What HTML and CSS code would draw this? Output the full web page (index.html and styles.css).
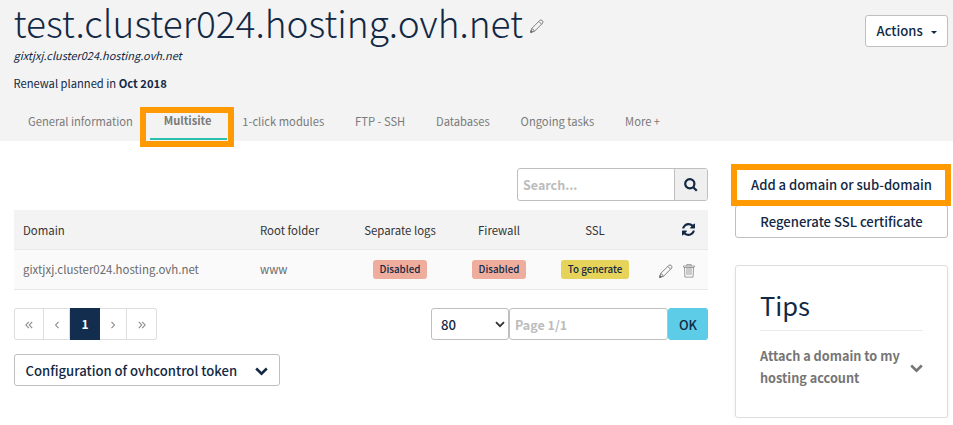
FILE: index.html
```
<!DOCTYPE html>
<html lang="en">
<head>
<meta charset="utf-8">
<title>test.cluster024.hosting.ovh.net</title>
<link rel="stylesheet" href="styles.css">
</head>
<body>
<svg class="defs" width="0" height="0" aria-hidden="true">
  <symbol id="pencil" viewBox="0 0 14 14">
    <path d="M.8 13.2 1.6 9.6 9.8 1.4Q11 .3 12.3 1.6T12.6 4.2L4.4 12.4Z M1.6 9.6Q3.8 9.9 4.4 12.4 M8.8 2.4l2.8 2.8"/>
    <path class="solid" d="M.5 13.5l.5-2 1.5 1.5z"/>
  </symbol>
</svg>
<header class="header">
  <div class="header-top">
    <div>
      <h1 class="title">test.cluster024.hosting.ovh.net<svg class="pencil pencil-title" width="14" height="14"><use href="#pencil"/></svg></h1>
      <p class="subtitle">gixtjxj.cluster024.hosting.ovh.net</p>
      <p class="renewal">Renewal planned in <b>Oct 2018</b></p>
    </div>
    <button class="btn actions">Actions <span class="caret"></span></button>
  </div>
  <nav class="tabs">
    <a class="tab">General information</a>
    <a class="tab active">Multisite</a>
    <a class="tab">1-click modules</a>
    <a class="tab">FTP - SSH</a>
    <a class="tab">Databases</a>
    <a class="tab">Ongoing tasks</a>
    <a class="tab">More +</a>
  </nav>
</header>
<main class="content">
  <section class="main-col">
    <div class="search">
      <div class="search-field">Search...</div>
      <button class="search-btn"><svg width="14" height="14" viewBox="0 0 14 14"><circle cx="5.8" cy="5.8" r="4.6"/><path d="M9.2 9.2l3.6 3.6"/></svg></button>
    </div>
    <div class="row head">
      <span>Domain</span><span>Root folder</span><span class="mid">Separate logs</span><span class="mid">Firewall</span><span class="mid">SSL</span>
      <span class="tools"><svg class="refresh" width="13" height="13" viewBox="0 0 1536 1536"><path d="M1511 928q0 5-1 7-64 268-268 434.500T764 1536q-146 0-282.500-55T238 1324l-129 129q-19 19-45 19t-45-19-19-45V960q0-26 19-45t45-19h448q26 0 45 19t19 45-19 45l-137 137q71 66 161 102t187 36q134 0 250-65t186-179q11-17 53-117 8-23 30-23h192q13 0 22.500 9.500t9.500 22.500zm25-800v448q0 26-19 45t-45 19h-448q-26 0-45-19t-19-45 19-45l138-138Q969 256 768 256q-134 0-250 65T332 500q-11 17-53 117-8 23-30 23H50q-13 0-22.500-9.500T18 608v-7q65-268 270-434.500T768 0q146 0 284 55.500T1297 212l130-129q19-19 45-19t45 19 19 45z"/></svg></span>
    </div>
    <div class="row item">
      <span>gixtjxj.cluster024.hosting.ovh.net</span><span>www</span>
      <span class="mid"><span class="badge red">Disabled</span></span>
      <span class="mid"><span class="badge red">Disabled</span></span>
      <span class="mid"><span class="badge yellow">To generate</span></span>
      <span class="tools">
        <svg class="pencil" width="14" height="14"><use href="#pencil"/></svg>
        <svg class="trash" width="12" height="14" viewBox="0 0 12 14"><path d="M.5 3V2h11v1M3.800 2V.6h4.400V2M1.500 3.500l.4 9.600h8.200l.4-9.600M4 4v7M6 4v7M8 4v7M.8 3.500h10.400"/></svg>
      </span>
    </div>
    <div class="pager-row">
      <div class="pager">
        <span><svg width="8" height="8" viewBox="0 0 8 8"><path d="M3.800.8.9 4l2.900 3.200M7.200.8 4.300 4l2.900 3.200"/></svg></span>
        <span><svg width="8" height="8" viewBox="0 0 8 8"><path d="M5.500.8 2.600 4l2.900 3.200"/></svg></span>
        <span class="current">1</span>
        <span><svg width="8" height="8" viewBox="0 0 8 8"><path d="M2.500.8 5.400 4 2.500 7.200"/></svg></span>
        <span><svg width="8" height="8" viewBox="0 0 8 8"><path d="M.8.8 3.700 4 .8 7.200M4.200.8 7.100 4 4.200 7.200"/></svg></span>
      </div>
      <div class="goto">
        <div class="select">80<svg width="10" height="7" viewBox="0 0 10 7"><path d="M1 1.200l4 4 4-4"/></svg></div>
        <div class="page-field">Page 1/1</div>
        <button class="ok">OK</button>
      </div>
    </div>
    <button class="btn token">Configuration of ovhcontrol token<svg class="chevron" width="13" height="9" viewBox="0 0 13 9"><path d="M1.200 1.500 6.500 6.600l5.300-5.100"/></svg></button>
  </section>
  <aside class="side">
    <button class="btn wide marked">Add a domain or sub-domain</button>
    <button class="btn wide">Regenerate SSL certificate</button>
    <div class="card">
      <h2 class="card-title">Tips</h2>
      <div class="tip"><span>Attach a domain to my hosting account</span><svg class="chevron" width="13" height="9" viewBox="0 0 13 9"><path d="M1.200 1.500 6.500 6.600l5.300-5.100"/></svg></div>
    </div>
  </aside>
</main>
</body>
</html>
```
FILE: styles.css
```
*, *::before, *::after { box-sizing: border-box; }
body {
  margin: 0;
  background: #fff;
  color: #122844;
  font: 400 11.2px/16px "Noto Sans CJK SC", "Noto Sans", sans-serif;
}
h1, h2, p { margin: 0; }
svg { display: block; fill: none; flex: none; }
.defs { position: absolute; }
button { font-family: inherit; color: inherit; margin: 0; padding: 0; }

.header { height: 141px; background: #f3f3f3; }
.header-top { display: flex; justify-content: space-between; align-items: flex-start; height: 113px; padding: 0 5px 0 13.5px; }
.title { display: flex; align-items: center; height: 44px; font-size: 37px; line-height: 44px; font-weight: 300; white-space: nowrap; }
.pencil { stroke: #666; stroke-width: .8; }
#pencil .solid { fill: #555; }
.pencil-title { margin: 7px 0 0 7px; }
.subtitle { margin-top: 3px; font-style: italic; font-size: 10.95px; }
.renewal { margin-top: 12px; }
.btn {
  display: flex; align-items: center; height: 32px;
  border: 1px solid #bfbfbf; border-radius: 3px; background: #fff;
  font-size: 13.1px; font-weight: 500; line-height: 20px; white-space: nowrap;
}
.actions { margin-top: 15px; width: 83px; padding-left: 10.5px; gap: 8px; }
.caret { border: 3px solid transparent; border-top-color: #122844; border-bottom: 0; margin-top: 2px; }

.tabs { display: flex; gap: .8px; height: 28px; padding-left: 13px; color: #7a7a7a; }
.tab { padding: 0 15px; height: 28px; white-space: nowrap; }
.active {
  position: relative; height: 27px; margin-top: -1px; font-weight: 700; font-size: 11.1px;
}
.active::before { content: ""; position: absolute; left: 1px; right: 0; top: 26px; height: 2px; background: #2bbfad; }
.active::after { content: ""; position: absolute; left: -9px; top: -5px; width: 94px; height: 40px; border: 6px solid #ff9a03; }

.content { display: flex; gap: 27px; padding: 27px 5px 0 14px; }
.main-col { width: 694px; }
.search { display: flex; width: 191px; height: 33px; margin-left: auto; border: 1px solid #bfbfbf; border-radius: 3px; overflow: hidden; }
.search-field { flex: 1; padding-left: 5px; color: #bcbcbc; font-weight: 700; font-size: 12.5px; line-height: 31px; }
.search-btn { display: flex; align-items: center; justify-content: center; width: 33px; border: 0; border-left: 1px solid #bfbfbf; background: #efefef; }
.search-btn svg { stroke: #122844; stroke-width: 2.2; }

.row {
  display: grid; grid-template-columns: 237px 89px 102px 96px 96px 1fr;
  align-items: center; height: 40px; padding-left: 9px;
  border-bottom: 1px solid #e8e8e8;
}
.head { margin-top: 9px; background: #f3f3f3; color: #333; font-size: 11.4px; }
.item { background: #fafafa; color: #6b6b6b; font-size: 11.45px; padding-bottom: 2px; }
.mid { display: flex; justify-content: center; }
.tools { display: flex; justify-content: flex-end; gap: 10px; padding-right: 13px; }
.refresh { fill: #122844; }
.item .tools { padding-top: 5px; }
.trash { stroke: #858585; stroke-width: .8; }
.badge { height: 19px; margin-top: 1px; padding: 0 7px; border-radius: 3px; color: #122844; font-size: 9.8px; font-weight: 500; line-height: 18px; }
.red { background: #efad9d; }
.yellow { background: #e6d35a; }

.pager-row { display: flex; justify-content: space-between; margin-top: 18px; }
.pager { display: grid; grid-template-columns: 30px 26px 30px 27px 30px; height: 32px; border-radius: 3px; box-shadow: inset 0 0 0 1px #dedede; }
.pager span { display: flex; align-items: center; justify-content: center; border-right: 1px solid #dedede; }
.pager span:last-child { border: 0; }
.pager svg { stroke: #888; stroke-width: 1.1; margin-top: 2px; }
.pager .current { border: 0; background: #122d4d; color: #fff; font-weight: 700; font-size: 12px; }
.goto { display: flex; height: 32px; font-size: 13.2px; line-height: 31px; }
.select, .page-field { border: 1px solid #bfbfbf; border-radius: 3px; background: #fff; }
.select { display: flex; align-items: center; justify-content: space-between; width: 78px; padding: 0 3px 0 9px; font-weight: 500; }
.select svg { stroke: #333; stroke-width: 1.8; }
.page-field { width: 159px; padding-left: 5px; color: #bcbcbc; font-weight: 700; font-size: 12.5px; }
.ok { width: 40px; border: 0; border-radius: 3px; background: #5dcde7; font-size: 12.8px; font-weight: 500; }
.token { width: 266px; margin-top: 14px; padding: 2px 11px 0 10.5px; justify-content: space-between; }
.chevron { stroke: #122844; stroke-width: 2.6; }

.side { width: 213px; }
.wide { justify-content: center; width: 213px; height: 33px; }
.wide + .wide { margin-top: 4px; }
.marked { position: relative; }
.marked::after { content: ""; position: absolute; left: -5px; top: -5px; width: 220px; height: 42px; border: 6px solid #ff9a03; }
.card { height: 153px; margin-top: 27px; padding: 22px 24px; border: 1px solid #dedede; border-radius: 3px; box-shadow: 0 2px 4px rgba(0,0,0,.06); }
.card-title { height: 43px; border-bottom: 1px solid #eaeae6; font-size: 25.5px; line-height: 34px; font-weight: 400; }
.tip { display: flex; align-items: center; justify-content: space-between; margin-top: 14px; color: #757575; font-weight: 700; font-size: 12.7px; line-height: 22px; }
.tip .chevron { stroke: #757575; margin: 2px 0 0 -2px; }
```
